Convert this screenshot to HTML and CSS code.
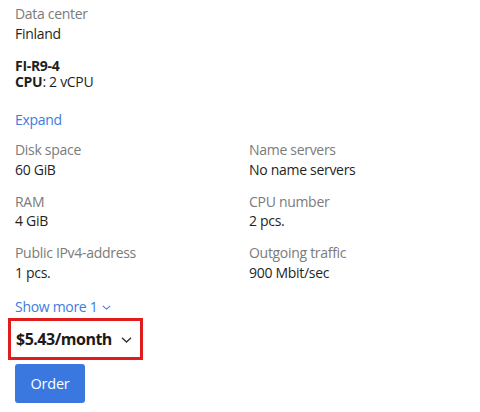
FILE: index.html
```html
<!DOCTYPE html>
<html>
<head>
<meta charset="utf-8">
<link rel="stylesheet" href="styles.css">
</head>
<body>
<div class="card">
  <div class="field">
    <div class="label">Data center</div>
    <div class="value">Finland</div>
  </div>
  <div class="plan">
    <div class="plan-name">FI-R9-4</div>
    <div class="plan-cpu"><b>CPU</b>: 2 vCPU</div>
  </div>
  <a class="link expand">Expand</a>
  <div class="grid">
    <div class="field">
      <div class="label">Disk space</div>
      <div class="value">60 GiB</div>
    </div>
    <div class="field">
      <div class="label">Name servers</div>
      <div class="value">No name servers</div>
    </div>
    <div class="field">
      <div class="label">RAM</div>
      <div class="value">4 GiB</div>
    </div>
    <div class="field">
      <div class="label">CPU number</div>
      <div class="value">2 pcs.</div>
    </div>
    <div class="field">
      <div class="label">Public IPv4-address</div>
      <div class="value">1 pcs.</div>
    </div>
    <div class="field">
      <div class="label">Outgoing traffic</div>
      <div class="value">900 Mbit/sec</div>
    </div>
  </div>
  <a class="link more">Show more 1 <svg class="chev-small" width="9" height="5" viewBox="0 0 9 5"><path d="M0.8 0.8l3.7 3.3L8.2 0.8" fill="none" stroke="currentColor" stroke-width="1.1"/></svg></a>
  <div class="price-box">
    <span class="price">$5.43/month</span>
    <svg class="chev" width="11" height="6" viewBox="0 0 11 6"><path d="M1 0.8l4.5 4.2L10 0.8" fill="none" stroke="#333" stroke-width="1.4"/></svg>
  </div>
  <button class="order">Order</button>
</div>
</body>
</html>
```
FILE: styles.css
```css
html, body {
  margin: 0;
  padding: 0;
  background: #fff;
}
body {
  font-family: "Open Sans", "Noto Sans", sans-serif;
  font-size: 14px;
  letter-spacing: -0.3px;
  color: #222;
}
.card {
  padding: 4px 15px 0 15px;
  display: flex;
  flex-direction: column;
  align-items: flex-start;
}
.field {
  line-height: 19.5px;
}
.label {
  color: #7b7b7b;
}
.value {
  color: #1f1f1f;
}
.plan {
  margin-top: 15px;
  line-height: 16px;
  color: #1f1f1f;
}
.plan-name {
  font-weight: 700;
}
.link {
  color: #3d7be0;
  text-decoration: none;
  line-height: 19px;
}
.expand {
  margin-top: 20px;
}
.grid {
  margin-top: 11px;
  display: grid;
  grid-template-columns: 234px 220px;
  row-gap: 12.5px;
  width: 100%;
}
.more {
  margin-top: 15px;
  display: flex;
  align-items: center;
  gap: 5px;
}
.chev-small {
  margin-top: 2px;
}
.price-box {
  margin: 2px 0 0 -7px;
  border: 3px solid #e01c1c;
  padding: 7px 8px 7px 5px;
  display: flex;
  align-items: center;
  gap: 9px;
}
.price {
  font-weight: 700;
  font-size: 16px;
  letter-spacing: -0.5px;
  color: #1b1b1b;
  line-height: 22px;
}
.chev {
  margin-top: 1px;
}
.order {
  margin-top: 4px;
  width: 70px;
  height: 39px;
  border: none;
  border-radius: 3px;
  background: #3a77df;
  color: #fff;
  font-family: inherit;
  font-size: 14.5px;
  letter-spacing: -0.2px;
  padding: 0;
}
```
